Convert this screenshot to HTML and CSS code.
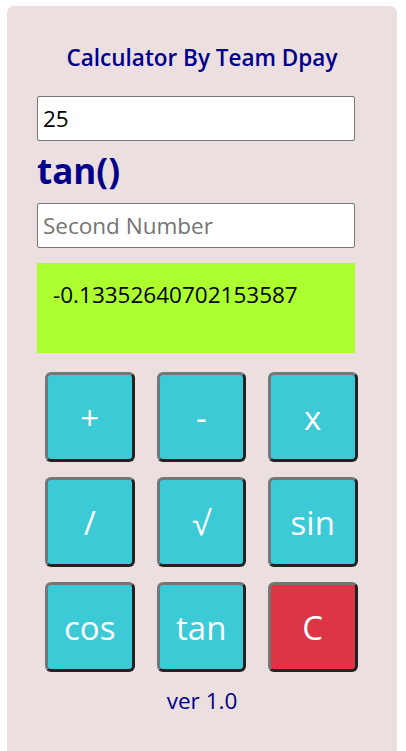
FILE: index.html
```html
<!DOCTYPE html>
<html>
<head>
<meta charset="utf-8">
<link rel="stylesheet" href="styles.css">
</head>
<body>
<div class="card">
  <h1 class="title">Calculator By Team Dpay</h1>
  <div class="form">
    <input class="field" type="text" value="25">
    <div class="op">tan()</div>
    <input class="field" type="text" placeholder="Second Number">
    <div class="result">-0.13352640702153587</div>
  </div>
  <div class="keys">
    <button class="key">+</button>
    <button class="key">-</button>
    <button class="key">x</button>
    <button class="key">/</button>
    <button class="key">√</button>
    <button class="key">sin</button>
    <button class="key">cos</button>
    <button class="key">tan</button>
    <button class="key clear">C</button>
  </div>
  <div class="version">ver 1.0</div>
</div>
</body>
</html>
```
FILE: styles.css
```css
html, body {
  margin: 0;
  padding: 0;
  background: #ffffff;
}
body {
  padding: 6px 9px 0 7px;
  font-family: "Open Sans", "Noto Sans", sans-serif;
}
.card {
  background: #ebdfe0;
  border-radius: 7px;
  min-height: 780px;
  box-sizing: border-box;
  padding-top: 37px;
}
.title {
  margin: 0;
  text-align: center;
  font-size: 22.5px;
  font-weight: 600;
  line-height: 30px;
  color: #00008b;
}
.form {
  margin-top: 23px;
  padding-left: 30px;
  width: 318px;
}
.field {
  display: block;
  box-sizing: border-box;
  width: 318px;
  height: 45px;
  margin: 0;
  padding: 0 5px;
  border: 1px solid #767676;
  border-radius: 2px;
  background: #fff;
  font-family: inherit;
  font-size: 22.5px;
  color: #000;
}
.field::placeholder {
  color: #757575;
}
.op {
  font-size: 35px;
  font-weight: 700;
  color: #00008b;
  line-height: 48px;
  margin: 6px 0 8px;
}
.result {
  margin-top: 15px;
  height: 90px;
  box-sizing: border-box;
  background: #adff2f;
  padding: 16px 16px;
  font-size: 22.5px;
  line-height: 32px;
  color: #000;
}
.keys {
  display: grid;
  grid-template-columns: repeat(3, 89.5px);
  grid-auto-rows: 90px;
  column-gap: 22px;
  row-gap: 15px;
  margin: 19px 0 0 38px;
}
.key {
  box-sizing: border-box;
  width: 89.5px;
  height: 90px;
  margin: 0;
  padding: 0;
  border: 3px solid;
  border-color: #767676 #222222 #222222 #767676;
  border-radius: 6px;
  background: #3bcad6;
  color: #fff;
  font-family: inherit;
  font-size: 33px;
  line-height: 1;
}
.key.clear {
  background: #dc3545;
}
.version {
  margin-top: 14px;
  text-align: center;
  font-size: 22.5px;
  line-height: 30px;
  color: #00008b;
}
```
